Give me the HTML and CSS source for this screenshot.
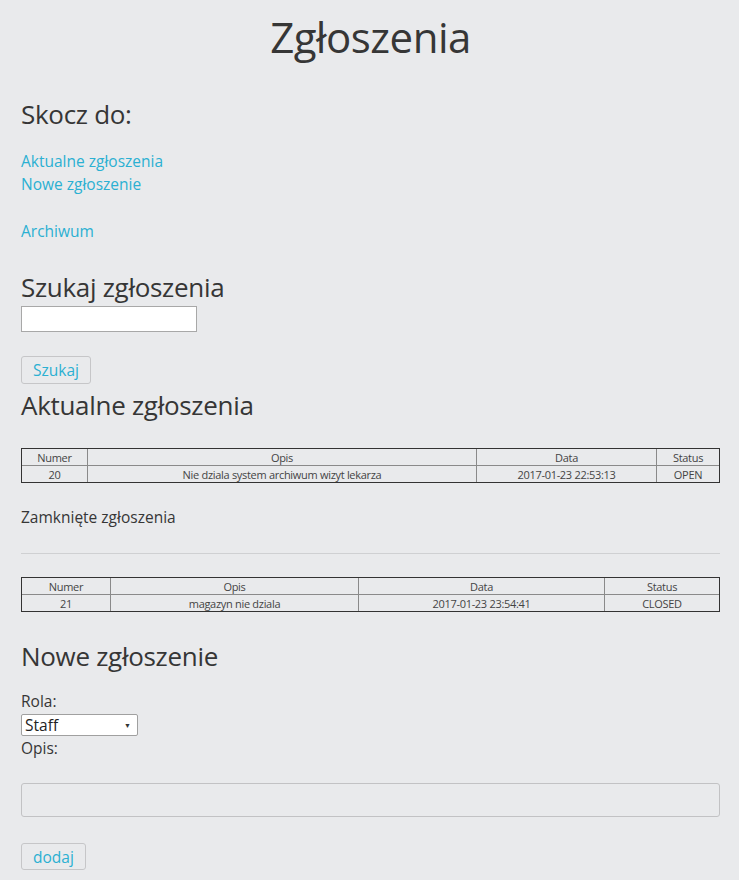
FILE: index.html
```html
<!DOCTYPE html>
<html lang="pl">
<head>
<meta charset="utf-8">
<title>Zgłoszenia</title>
<link rel="stylesheet" href="styles.css">
</head>
<body>
<main class="page">
  <h1 class="title">Zgłoszenia</h1>

  <h2 class="heading jump">Skocz do:</h2>
  <nav class="links">
    <a href="#aktualne">Aktualne zgłoszenia</a>
    <a href="#nowe">Nowe zgłoszenie</a>
    <a href="#archiwum" class="gap-link">Archiwum</a>
  </nav>

  <h2 class="heading search-h">Szukaj zgłoszenia</h2>
  <form class="search">
    <input type="text" class="text-input">
    <button type="button" class="btn">Szukaj</button>
  </form>

  <h2 class="heading current-h" id="aktualne">Aktualne zgłoszenia</h2>
  <table class="tickets t-open">
    <thead>
      <tr><th class="c-num">Numer</th><th class="c-desc">Opis</th><th class="c-date">Data</th><th class="c-status">Status</th></tr>
    </thead>
    <tbody>
      <tr><td>20</td><td>Nie dziala system archiwum wizyt lekarza</td><td>2017-01-23 22:53:13</td><td>OPEN</td></tr>
    </tbody>
  </table>

  <p class="closed-label" id="archiwum">Zamknięte zgłoszenia</p>
  <hr class="divider">

  <table class="tickets t-closed">
    <thead>
      <tr><th class="c-num">Numer</th><th class="c-desc">Opis</th><th class="c-date">Data</th><th class="c-status">Status</th></tr>
    </thead>
    <tbody>
      <tr><td>21</td><td>magazyn nie dziala</td><td>2017-01-23 23:54:41</td><td>CLOSED</td></tr>
    </tbody>
  </table>

  <h2 class="heading new-h" id="nowe">Nowe zgłoszenie</h2>
  <form class="new-form">
    <label class="field-label">Rola:</label>
    <div class="select"><span>Staff</span><span class="arrow">▼</span></div>
    <label class="field-label">Opis:</label>
    <textarea class="textarea"></textarea>
    <button type="button" class="btn btn-add">dodaj</button>
  </form>
</main>
</body>
</html>
```
FILE: styles.css
```css
html, body {
  margin: 0;
  padding: 0;
  background: #e9eaec;
}
body {
  font-family: "Open Sans", "Liberation Sans", sans-serif;
  color: #363636;
}
.page {
  display: flex;
  flex-direction: column;
  align-items: flex-start;
  padding: 0 19px 0 21px;
}
.title {
  align-self: center;
  font-size: 42px;
  font-weight: 400;
  line-height: 46px;
  margin: 14px 0 0 0;
  letter-spacing: -0.5px;
}
.heading {
  font-size: 26px;
  font-weight: 400;
  line-height: 30px;
  margin: 0;
  letter-spacing: -0.3px;
}
.jump { margin-top: 39px; }
.links {
  display: flex;
  flex-direction: column;
  margin-top: 21px;
}
.links a {
  color: #2bb0d2;
  text-decoration: none;
  font-size: 15.5px;
  line-height: 23px;
}
.links .gap-link { margin-top: 24px; }
.search-h { margin-top: 29px; }
.search {
  display: flex;
  flex-direction: column;
  align-items: flex-start;
  margin: 0;
}
.text-input {
  width: 176px;
  height: 26px;
  box-sizing: border-box;
  border: 1px solid #a8a8a8;
  background: #fff;
  margin-top: 4px;
  padding: 0;
}
.btn {
  font-family: "Open Sans", "Liberation Sans", sans-serif;
  font-size: 15.5px;
  color: #2bb0d2;
  background: transparent;
  border: 1px solid #c6c6c8;
  border-radius: 3px;
  height: 28px;
  padding: 0 11px;
  margin-top: 24px;
}
.current-h { margin-top: 6px; }
.tickets {
  width: 100%;
  border-collapse: separate;
  border-spacing: 0;
  border: 1px solid #333;
  font-size: 11px;
  color: #444;
  margin-top: 28px;
  letter-spacing: -0.3px;
}
.tickets th, .tickets td {
  border: 0;
  border-right: 1px solid #8a8a8a;
  text-align: center;
  font-weight: 400;
  padding: 0;
  height: 16px;
  line-height: 15px;
}
.tickets th { border-bottom: 1px solid #8a8a8a; }
.tickets th:last-child, .tickets td:last-child { border-right: 0; }
.t-open .c-num { width: 65px; }
.t-open .c-date { width: 179px; }
.t-open .c-status { width: 62px; }
.t-closed .c-num { width: 88px; }
.t-closed .c-desc { width: 247px; }
.t-closed .c-date { width: 245px; }
.closed-label {
  font-size: 15.5px;
  line-height: 20px;
  margin: 24px 0 0 0;
}
.divider {
  width: 100%;
  border: 0;
  border-top: 1px solid #cfd0d2;
  margin: 26px 0 0 0;
}
.t-closed { margin-top: 23px; }
.new-h { margin-top: 29px; }
.new-form {
  display: flex;
  flex-direction: column;
  align-items: flex-start;
  width: 100%;
  margin-top: 20px;
}
.field-label {
  font-size: 15.5px;
  line-height: 20px;
}
.select {
  width: 117px;
  height: 22px;
  box-sizing: border-box;
  background: #fff;
  border: 1px solid #a0a0a0;
  border-radius: 2px;
  display: flex;
  align-items: center;
  justify-content: space-between;
  padding: 0 6px 0 3px;
  font-size: 15.5px;
  color: #222;
  margin: 3px 0 2px 0;
}
.arrow {
  font-size: 7px;
  color: #333;
}
.textarea {
  width: 100%;
  height: 34px;
  box-sizing: border-box;
  background: transparent;
  border: 1px solid #c2c2c4;
  border-radius: 3px;
  margin-top: 25px;
  resize: none;
}
.btn-add {
  margin-top: 26px;
  height: 27px;
  padding: 0 11px;
}
```
